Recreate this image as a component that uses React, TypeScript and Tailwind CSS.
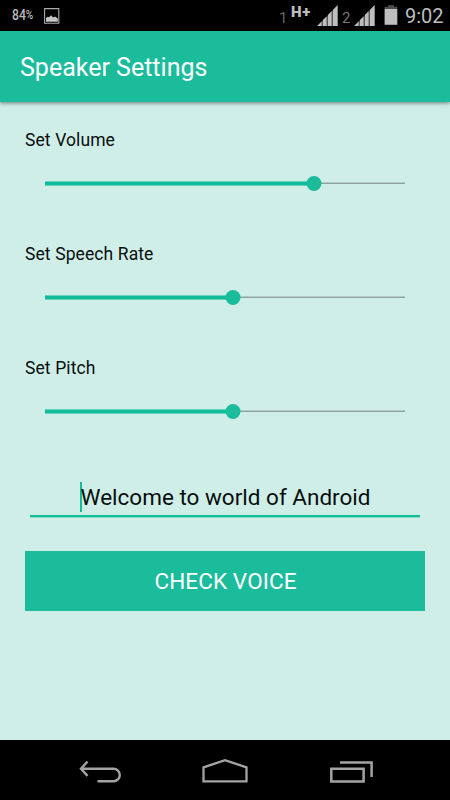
import { useState } from "react";

const initialSettings = [
  { label: "Set Volume", value: 74.8 },
  { label: "Set Speech Rate", value: 52.3 },
  { label: "Set Pitch", value: 52.3 },
];

function SignalIcon() {
  return (
    <svg width="21" height="21" viewBox="0 0 21 20" preserveAspectRatio="none" className="shrink-0">
      <path d="M0 20 L4.8 15.4 V20Z M5.8 14.4 L9.8 10.6 V20 H5.8Z M10.8 9.6 L14.8 5.8 V20 H10.8Z M15.8 4.8 L20.7 0 V20 H15.8Z" fill="#bebebe" />
      <path d="M4.8 15.4h1V20h-1z M9.8 10.6h1V20h-1z M14.8 5.8h1V20h-1z" fill="#666" />
    </svg>
  );
}

function StatusBar() {
  return (
    <div className="flex h-[31px] shrink-0 items-start bg-black text-[#bebebe]">
      <span className="ml-3 mt-[7px] w-8 text-[14.5px] leading-[18px] text-[#b8b8b8]">
        <span className="inline-block origin-left scale-x-[0.84] font-medium">
          84<span className="relative -top-px text-[12px]">%</span>
        </span>
      </span>
      <svg width="16" height="16" viewBox="0 0 16 16" className="mt-2 shrink-0">
        <path d="M.6 .6h14.2v14.6H.6z" fill="none" stroke="#aaa" strokeWidth="1.1" />
        <path d="M2 13.8V10l1.8-1.2 1.2.4 2-2 2.2 2.2 1.8-.8 2.8 2v3.2z" fill="#c4c4c4" />
      </svg>
      <span className="ml-[219px] mt-2 w-3 text-[15px] leading-5 text-[#666]">1</span>
      <span className="mt-1 w-[26px] text-[15px] font-black leading-4 tracking-[0.6px]">H+</span>
      <span className="mt-[5px] w-[25px]"><SignalIcon /></span>
      <span className="mt-2 w-3 text-[15px] leading-5 text-[#777]">2</span>
      <span className="mt-[5px] w-[30px]"><SignalIcon /></span>
      <svg width="14" height="20" viewBox="0 0 14 20" className="mt-[5px] shrink-0">
        <path d="M4 .2h6v1.6h3.3v2.4H.6V1.8H4z" fill="#4d4d4d" />
        <path d="M.6 4h12.7v15.8H.6z" fill="#bebebe" />
      </svg>
      <span className="ml-[7px] mt-1 text-[20px] leading-6">9:02</span>
    </div>
  );
}

function SettingSlider({ label, value, onChange }: { label: string; value: number; onChange: (value: number) => void }) {
  return (
    <div className="h-[114px]">
      <div className="text-[17.5px] leading-6 tracking-[0.1px]">{label}</div>
      <div className="relative mx-5 mt-[23px] h-4">
        <div className="flex h-4 items-start pt-1.5">
          <div className="h-[5px] border-y border-[#67d3bd] bg-[#10bc9a]" style={{ width: `${value}%` }} />
          <div className="mt-px h-0.5 flex-1 border-t border-[#b2cbc5] bg-[#8ca39e]" />
        </div>
        <div
          className="absolute top-[0.5px] size-[15px] -translate-x-1/2 rounded-full bg-[#1bbc9c]"
          style={{ left: `${value}%` }}
        />
        <input
          type="range"
          aria-label={label}
          value={value}
          step="0.1"
          onChange={(e) => onChange(Number(e.target.value))}
          className="absolute inset-0 w-full opacity-0"
        />
      </div>
    </div>
  );
}

function NavBar() {
  return (
    <div className="flex h-[60px] shrink-0 bg-black pl-[79px] pt-[13px]">
      <svg width="44" height="32" viewBox="0 0 44 32" fill="none" stroke="#a4a4a4" strokeWidth="2.4">
        <path d="M8.5 8.5 L2 15.7 L8.5 22.9 M2 15.7H34.5a6.3 6.3 0 0 1 0 12.6H18.5" />
      </svg>
      <svg width="48" height="32" viewBox="0 0 48 32" fill="none" stroke="#a4a4a4" strokeWidth="2.3" className="ml-[78px]">
        <path d="M2.5 28.3V14.3L24 7.2L45.5 14.3V28.3Z" />
      </svg>
      <svg width="46" height="32" viewBox="0 0 46 32" fill="none" stroke="#a4a4a4" strokeWidth="2.5" className="ml-[80px]">
        <path d="M2.3 15.7H34.6V28.4H2.3Z M11 9.4H42.6V24" />
      </svg>
    </div>
  );
}

export default function App() {
  const [settings, setSettings] = useState(initialSettings);

  const updateSetting = (index: number, value: number) => {
    setSettings(settings.map((item, i) => (i === index ? { ...item, value } : item)));
  };

  return (
    <div className="flex h-[800px] w-[450px] flex-col overflow-hidden bg-[#d0eee8] font-['Roboto',sans-serif] text-[#080e0d]">
      <StatusBar />
      <header className="z-10 flex h-[71px] shrink-0 items-center bg-[#1bbc9c] pl-5 pt-0.5 text-[25px] text-white shadow-[0_1px_4px_rgba(0,0,0,0.5)]">
        <h1>Speaker Settings</h1>
      </header>

      <main className="flex-1 px-[25px] pt-[26px]">
        {settings.map((item, i) => (
          <SettingSlider key={item.label} label={item.label} value={item.value} onChange={(value) => updateSetting(i, value)} />
        ))}

        {/* Phrase to speak */}
        <div className="mx-[5px] mt-3 flex h-[35px] justify-center border-b-2 border-[#10bc9a] shadow-[0_1px_0_#8fdccb]">
          <span className="h-[30px] w-0.5 bg-[#13bc9a]" />
          <span className="-ml-px text-[22.5px] leading-[31px]">Welcome to world of Android</span>
        </div>

        <button className="mt-[34px] h-[60px] w-full bg-[#1bbc9c] pl-px pt-0.5 text-[22.5px] tracking-[0.1px] text-white">CHECK VOICE</button>
      </main>

      <NavBar />
    </div>
  );
}
